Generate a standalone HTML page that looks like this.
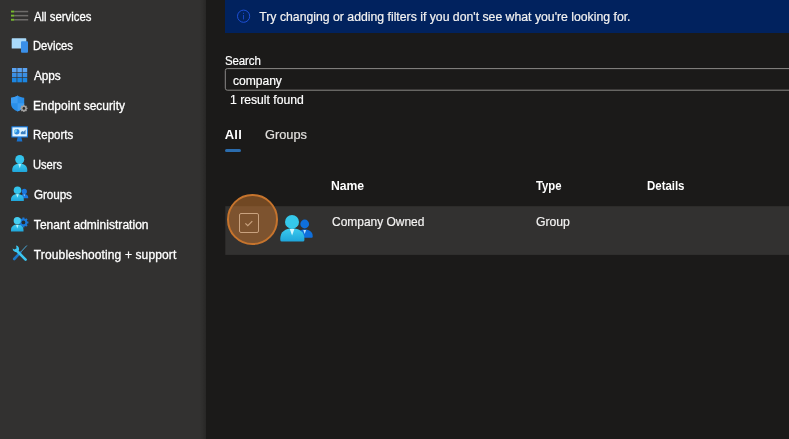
<!DOCTYPE html>
<html><head><meta charset="utf-8"><title>Search</title>
<style>
html,body{margin:0;padding:0;}
body{width:789px;height:439px;overflow:hidden;background:#1b1a19;font-family:"Liberation Sans",sans-serif;color:#fff;position:relative;}
.side{position:absolute;left:-10px;top:-10px;width:216px;height:459px;background:#323130;}
.shadow{position:absolute;left:200px;top:-10px;width:6px;height:459px;background:linear-gradient(90deg,#323130 0%,#2f2e2d 40%,#282726 100%);}
.banner{position:absolute;left:225px;top:-10px;width:584px;height:43px;background:#01225e;}
.t{position:absolute;white-space:nowrap;line-height:20px;transform-origin:0 0;}
.inp{position:absolute;left:225px;top:68px;width:580px;height:23px;border:1px solid #8a8886;border-radius:2px;box-sizing:border-box;}
.row{position:absolute;left:225px;top:206px;width:564px;height:49px;background:#323130;}
.ul{position:absolute;left:225px;top:149px;width:16px;height:3px;background:#2b6cad;border-radius:1.5px;}
.halo{position:absolute;left:227.3px;top:194.4px;width:50.6px;height:50.6px;border-radius:50%;box-sizing:border-box;border:2.2px solid #c6742d;background:rgba(200,117,45,0.5);}
.cb{position:absolute;left:239px;top:213px;width:20px;height:20px;border:1px solid #c9a27f;border-radius:2px;box-sizing:border-box;}
svg{position:absolute;left:0;top:0;overflow:visible;}
#wrap{position:absolute;left:-10px;top:-10px;width:809px;height:459px;background:#1b1a19;filter:blur(0.4px);}
#in{position:absolute;left:10px;top:10px;width:789px;height:439px;}
</style></head><body><div id="wrap"><div id="in">
<div class="side"></div><div class="shadow"></div>
<div class="banner"></div>
<svg width="789" height="439" viewBox="0 0 789 439"><rect x="225.3" y="68.6" width="580" height="21.6" rx="2" fill="none" stroke="#8a8886" stroke-width="1"/><rect x="225.3" y="206.2" width="570" height="48.7" fill="#323130"/></svg>
<div class="ul"></div>
<div class="t" style="left:33.75px;top:7.0px;font-size:12px;color:#ffffff;-webkit-text-stroke:0.3px #ffffff;transform:scaleX(0.948);">All services</div>
<div class="t" style="left:33.37px;top:36.0px;font-size:12px;color:#ffffff;-webkit-text-stroke:0.3px #ffffff;letter-spacing:0.01px;transform:scaleX(0.931);">Devices</div>
<div class="t" style="left:33.56px;top:66.0px;font-size:12px;color:#ffffff;-webkit-text-stroke:0.3px #ffffff;letter-spacing:-0.1px;transform:scaleX(0.984);">Apps</div>
<div class="t" style="left:33.31px;top:96.0px;font-size:12px;color:#ffffff;-webkit-text-stroke:0.3px #ffffff;letter-spacing:0.02px;transform:scaleX(0.996);">Endpoint security</div>
<div class="t" style="left:33.33px;top:125.0px;font-size:12px;color:#ffffff;-webkit-text-stroke:0.3px #ffffff;transform:scaleX(0.955);">Reports</div>
<div class="t" style="left:33.4px;top:155.0px;font-size:12px;color:#ffffff;-webkit-text-stroke:0.3px #ffffff;letter-spacing:-0.05px;transform:scaleX(0.933);">Users</div>
<div class="t" style="left:33.58px;top:185.0px;font-size:12px;color:#ffffff;-webkit-text-stroke:0.3px #ffffff;letter-spacing:-0.1px;transform:scaleX(0.976);">Groups</div>
<div class="t" style="left:33.87px;top:215.0px;font-size:12px;color:#ffffff;-webkit-text-stroke:0.3px #ffffff;letter-spacing:0.03px;">Tenant administration</div>
<div class="t" style="left:33.87px;top:245.0px;font-size:12px;color:#ffffff;-webkit-text-stroke:0.3px #ffffff;letter-spacing:0.13px;">Troubleshooting + support</div>
<div class="t" style="left:259.27px;top:7.0px;font-size:12.25px;color:#f3f2f1;-webkit-text-stroke:0.2px #f3f2f1;">Try changing or adding filters if you don&#39;t see what you&#39;re looking for.</div>
<div class="t" style="left:224.7px;top:51.0px;font-size:12.5px;color:#ffffff;-webkit-text-stroke:0.2px #ffffff;letter-spacing:-0.13px;transform:scaleX(0.92);">Search</div>
<div class="t" style="left:233.14px;top:71.0px;font-size:12.5px;color:#ffffff;-webkit-text-stroke:0.2px #ffffff;letter-spacing:-0.05px;transform:scaleX(0.97);">company</div>
<div class="t" style="left:229.76px;top:90.0px;font-size:12.5px;color:#ffffff;-webkit-text-stroke:0.2px #ffffff;letter-spacing:-0.01px;transform:scaleX(0.976);">1 result found</div>
<div class="t" style="left:224.63px;top:125.0px;font-size:13px;color:#ffffff;font-weight:700;letter-spacing:0.3px;">All</div>
<div class="t" style="left:264.53px;top:125.0px;font-size:13px;color:#e1dfdd;-webkit-text-stroke:0.2px #e1dfdd;letter-spacing:-0.01px;transform:scaleX(0.984);">Groups</div>
<div class="t" style="left:331.28px;top:176.0px;font-size:12.25px;color:#ffffff;font-weight:700;letter-spacing:-0.06px;transform:scaleX(0.996);">Name</div>
<div class="t" style="left:536.22px;top:176.0px;font-size:12.25px;color:#ffffff;font-weight:700;letter-spacing:-0.04px;transform:scaleX(0.927);">Type</div>
<div class="t" style="left:646.8px;top:176.0px;font-size:12.25px;color:#ffffff;font-weight:700;letter-spacing:-0.03px;transform:scaleX(0.938);">Details</div>
<div class="t" style="left:331.57px;top:212.0px;font-size:12.75px;color:#f3f2f1;-webkit-text-stroke:0.2px #f3f2f1;transform:scaleX(0.938);">Company Owned</div>
<div class="t" style="left:535.55px;top:212.0px;font-size:12.75px;color:#f3f2f1;-webkit-text-stroke:0.2px #f3f2f1;letter-spacing:-0.08px;transform:scaleX(0.959);">Group</div>
<svg width="789" height="439" viewBox="0 0 789 439">
<defs>
<linearGradient id="cy" x1="0" y1="0" x2="0" y2="1"><stop offset="0" stop-color="#3ccbee"/><stop offset="1" stop-color="#1fa5da"/></linearGradient>
</defs>
<!-- all services -->
<g>
<rect x="14.2" y="10.8" width="14" height="1.5" fill="#6e6c6a"/><rect x="11" y="10.6" width="3.2" height="1.9" fill="#76b82e"/>
<rect x="14.2" y="14.9" width="14" height="1.5" fill="#6e6c6a"/><rect x="11" y="14.7" width="3.2" height="1.9" fill="#76b82e"/>
<rect x="14.2" y="19" width="14" height="1.5" fill="#6e6c6a"/><rect x="11" y="18.8" width="3.2" height="1.9" fill="#76b82e"/>
</g>
<!-- devices -->
<g>
<rect x="11.7" y="38.3" width="14.6" height="10.3" rx="0.6" fill="#a9dafa"/>
<rect x="21" y="41.3" width="7" height="11.5" rx="1" fill="#3a8fe8"/>
</g>
<!-- apps -->
<g>
<rect x="12" y="68" width="4.6" height="4.3" fill="#5aa3f2"/><rect x="17.3" y="68" width="4.6" height="4.3" fill="#5aa3f2"/><rect x="22.6" y="68" width="4.6" height="4.3" fill="#5aa3f2"/>
<rect x="12" y="73" width="4.6" height="4.3" fill="#3b8fe4"/><rect x="17.3" y="73" width="4.6" height="4.3" fill="#3b8fe4"/><rect x="22.6" y="73" width="4.6" height="4.3" fill="#3b8fe4"/>
<rect x="12" y="78" width="4.6" height="4.3" fill="#1c86e2"/><rect x="17.3" y="78" width="4.6" height="4.3" fill="#1c86e2"/><rect x="22.6" y="78" width="4.6" height="4.3" fill="#1c86e2"/>
</g>
<!-- endpoint security -->
<g>
<path d="M17.6 95.6 C15.5 97 13.3 97.6 11 97.8 V103.5 C11 107.5 14 110 17.6 111.4 C21.2 110 24.2 107.5 24.2 103.5 V97.8 C21.9 97.6 19.7 97 17.6 95.6Z" fill="#2a8fe9"/>
<path d="M17.6 95.6 C15.5 97 13.3 97.6 11 97.8 V103.3 H17.6Z" fill="#3d9cf0"/>
<path d="M17.6 103.3 H24.2 V103.5 C24.2 107.5 21.2 110 17.6 111.4Z" fill="#3d9cf0"/>
<circle cx="23.9" cy="108.4" r="2.9" fill="#a3a19f"/>
<g stroke="#a3a19f" stroke-width="1.3"><path d="M23.9 104.8V112M20.3 108.4H27.5M21.35 105.85L26.45 110.95M26.45 105.85L21.35 110.95"/></g>
<circle cx="23.9" cy="108.4" r="1.3" fill="#2b2a29"/>
</g>
<!-- reports -->
<g>
<path d="M16.6 141.6 L17.8 137 H21.2 L22.4 141.6Z" fill="#1873cf"/>
<rect x="11.3" y="126.3" width="16.7" height="11.2" rx="0.6" fill="#1a7ada"/>
<rect x="12.4" y="127.4" width="14.5" height="9" fill="#dff3ff"/>
<circle cx="16.8" cy="131.8" r="2.7" fill="#2d8be0"/>
<path d="M16.8 131.8 V129.1 A2.7 2.7 0 0 0 14.5 133.2Z" fill="#7fd0f0"/>
<path d="M20.8 134.2 V132.2 L22.5 131 L23.8 131.8 L25.6 129.6 V134.2Z" fill="#3a7fc0"/>
</g>
<!-- users -->
<g>
<circle cx="19.75" cy="159.5" r="4.5" fill="#33c3ec"/>
<path d="M13.2 172 Q12.2 172 12.2 171 V170 C12.2 166 15.5 163.6 19.75 163.6 C24 163.6 27.3 166 27.3 170 V171 Q27.3 172 26.3 172Z" fill="url(#cy)"/>
<path d="M18.3 164 H21.2 L19.75 168.3Z" fill="#b9f0fb"/>
</g>
<!-- groups -->
<g>
<circle cx="24.3" cy="191.4" r="2.6" fill="#1a78e0"/>
<path d="M20.5 198.3 V197.5 C20.5 195.2 22 194 24.3 194 C26.6 194 28.2 195.2 28.2 197.5 V198.3Z" fill="#1a78e0"/>
<path d="M23.5 194.4 H25.1 L24.3 196.6Z" fill="#9cd4fb"/>
<circle cx="17.5" cy="190.2" r="3.8" fill="#33c3ec"/>
<path d="M11 201 V199.3 C11 196 13.8 193.9 17.4 193.9 C21 193.9 23.8 196 23.8 199.3 V201Z" fill="url(#cy)"/>
<path d="M16.2 194.3 H18.7 L17.45 197.8Z" fill="#b9f0fb"/>
</g>
<!-- tenant admin -->
<g>
<g stroke="#1a78d8" stroke-width="2"><path d="M23.4 217.45V227.45M18.40 222.45H28.40M19.86 218.91L26.94 225.99M26.94 218.91L19.86 225.99"/></g>
<circle cx="23.4" cy="222.45" r="3.9" fill="#1a78d8"/>
<circle cx="23.4" cy="222.45" r="1.9" fill="#2b2a29"/>
<circle cx="17.25" cy="220.7" r="3.6" fill="#45cdf0"/>
<path d="M11 231.6 V230 C11 226.6 13.8 224.6 17.25 224.6 C20.7 224.6 23.5 226.6 23.5 230 V231.6Z" fill="url(#cy)"/>
<path d="M16.1 225 H18.5 L17.3 228.4Z" fill="#b9f0fb"/>
</g>
<!-- troubleshooting -->
<g>
<path d="M26.6 245.8 L21 251.8" stroke="#4aa8d8" stroke-width="1" stroke-linecap="round"/>
<path d="M20.2 252.6 L14.2 259" stroke="#1a78c8" stroke-width="2.6" stroke-linecap="round"/>
<path d="M16.5 250.5 L25.6 259.6" stroke="#3cc6f0" stroke-width="2.6" stroke-linecap="round"/>
<path d="M12.6 248.6 A3.4 3.4 0 0 0 18.6 250.8 A3.4 3.4 0 0 0 16 245.6 L16.6 248.3 L14.6 249.6Z" fill="#3cc6f0"/>
</g>
<!-- info icon -->
<g>
<circle cx="243.6" cy="16.2" r="6.1" fill="none" stroke="#1d4fd6" stroke-width="1"/>
<rect x="243.2" y="15" width="0.8" height="4.4" fill="#1d4fd6"/><rect x="243.2" y="12.8" width="0.8" height="1.1" fill="#1d4fd6"/>
</g>
<!-- group icon big -->
<g>
<circle cx="304.7" cy="224" r="4.4" fill="#0f6fdc"/>
<path d="M297 237.7 V236.2 C297 232 300 229.6 304.7 229.6 C309.4 229.6 312.7 232 312.7 236.2 V236.7 Q312.7 237.7 311.7 237.7Z" fill="#0f6fdc"/>
<path d="M303.3 230 H306.1 L304.7 234Z" fill="#bfe6ff"/>
<circle cx="292" cy="221.9" r="7" fill="#35c8ea"/>
<path d="M281.8 241.5 Q280.3 241.5 280.3 240 V238.5 C280.3 232 285.5 228.3 292.3 228.3 C299.1 228.3 304.4 232 304.4 238.5 V240 Q304.4 241.5 302.9 241.5Z" fill="url(#cy)"/>
<path d="M289.8 229 H294.4 L292.1 235.6Z" fill="#d6f6fd"/>
</g>
</svg>

<div class="halo"></div><div class="cb"></div>
<svg width="789" height="439" viewBox="0 0 789 439"><path d="M245.4 223.3 L247.8 225.7 L252.3 221.2" fill="none" stroke="#c9a27f" stroke-width="1.2"/></svg>

</div></div></body></html>
